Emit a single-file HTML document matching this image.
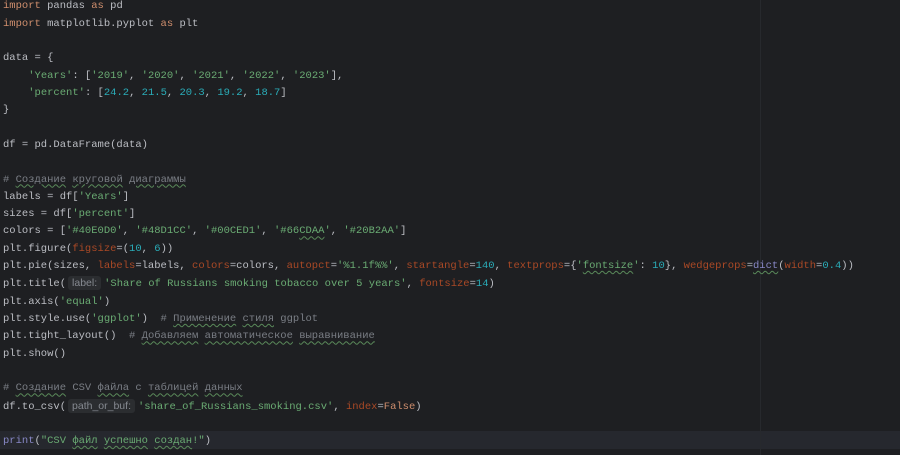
<!DOCTYPE html>
<html><head><meta charset="utf-8"><style>
body{margin:0;width:900px;height:455px;background:#1e1f22;overflow:hidden;position:relative}
.code{position:absolute;left:3px;top:-1.6px;font-family:"Liberation Mono","DejaVu Sans Mono",monospace;font-size:10.5px;line-height:17.32px;color:#bcbec4;white-space:pre}
.k{color:#cf8e6d}.s{color:#6aab73}.n{color:#2aacb8}.p{color:#aa4926}.c{color:#7a7e85}.b{color:#8888c6}
.u{text-decoration:underline wavy #5a8a5a;text-decoration-thickness:1px;text-underline-offset:2px}
.h{font-family:"Liberation Sans",sans-serif;font-size:10.5px;color:#868a91;background:#2b2d30;border-radius:3px;padding:1px 4px;margin:0 3px 0 2px}
.cur{position:absolute;left:0;top:431px;width:900px;height:18px;background:#26282e}
.vl{position:absolute;left:760px;top:0;width:1px;height:455px;background:#27292d}
</style></head><body>
<div class="cur"></div><div class="vl"></div>
<div class="code"><span class="k">import</span> pandas <span class="k">as</span> pd
<span class="k">import</span> matplotlib.pyplot <span class="k">as</span> plt

data = {
    <span class="s">'Years'</span>: [<span class="s">'2019'</span>, <span class="s">'2020'</span>, <span class="s">'2021'</span>, <span class="s">'2022'</span>, <span class="s">'2023'</span>],
    <span class="s">'percent'</span>: [<span class="n">24.2</span>, <span class="n">21.5</span>, <span class="n">20.3</span>, <span class="n">19.2</span>, <span class="n">18.7</span>]
}

df = pd.DataFrame(data)

<span class="c"># <span class="u">Создание</span> <span class="u">круговой</span> <span class="u">диаграммы</span></span>
labels = df[<span class="s">'Years'</span>]
sizes = df[<span class="s">'percent'</span>]
colors = [<span class="s">'#40E0D0'</span>, <span class="s">'#48D1CC'</span>, <span class="s">'#00CED1'</span>, <span class="s">'#66<span class="u">CDAA</span>'</span>, <span class="s">'#20B2AA'</span>]
plt.figure(<span class="p">figsize</span>=(<span class="n">10</span>, <span class="n">6</span>))
plt.pie(sizes, <span class="p">labels</span>=labels, <span class="p">colors</span>=colors, <span class="p">autopct</span>=<span class="s">'%1.1f%%'</span>, <span class="p">startangle</span>=<span class="n">140</span>, <span class="p">textprops</span>={<span class="s">'<span class="u">fontsize</span>'</span>: <span class="n">10</span>}, <span class="p">wedgeprops</span>=<span class="b u">dict</span>(<span class="p">width</span>=<span class="n">0.4</span>))
plt.title(<span class="h">label:</span><span class="s">'Share of Russians smoking tobacco over 5 years'</span>, <span class="p">fontsize</span>=<span class="n">14</span>)
plt.axis(<span class="s">'equal'</span>)
plt.style.use(<span class="s">'ggplot'</span>)  <span class="c"># <span class="u">Применение</span> <span class="u">стиля</span> ggplot</span>
plt.tight_layout()  <span class="c"># <span class="u">Добавляем</span> <span class="u">автоматическое</span> <span class="u">выравнивание</span></span>
plt.show()

<span class="c"># <span class="u">Создание</span> CSV <span class="u">файла</span> с <span class="u">таблицей</span> <span class="u">данных</span></span>
df.to_csv(<span class="h">path_or_buf:</span><span class="s">'share_of_Russians_smoking.csv'</span>, <span class="p">index</span>=<span class="k">False</span>)

<span class="b">print</span>(<span class="s">"CSV <span class="u">файл</span> <span class="u">успешно</span> <span class="u">создан</span>!"</span>)</div>
</body></html>
